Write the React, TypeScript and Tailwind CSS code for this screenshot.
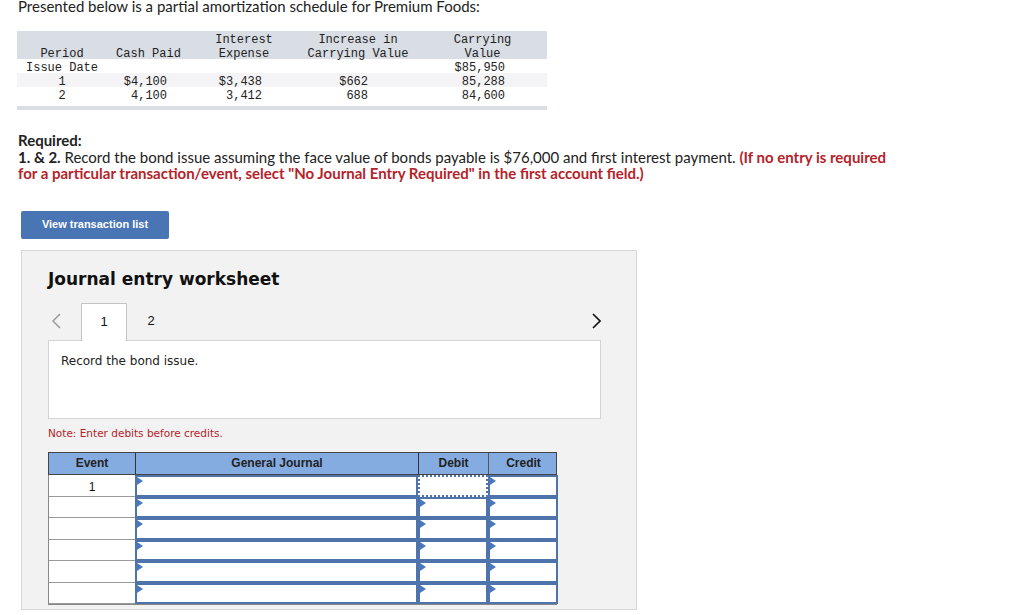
import React from "react";

const mono = { fontFamily: '"Liberation Mono", monospace' };

function Tri() {
  return (
    <svg className="absolute left-0 top-0" width="6" height="8" viewBox="0 0 6 8">
      <polygon points="0,0 6,4 0,8" fill="#4a78c0" />
    </svg>
  );
}

export default function App() {
  const rows = [22, 21, 22, 21, 22, 21];
  return (
    <div className="w-[1024px] h-[615px] bg-white overflow-hidden text-[#222]" style={{ fontFamily: 'Lato, "Open Sans", sans-serif' }}>
      <div className="pl-[18px] pt-0 text-[15px] leading-[13px] text-[#222]">
        Presented below is a partial amortization schedule for Premium Foods:
      </div>

      {/* amortization table */}
      <div className="ml-[17px] mt-[18px] w-[530px] text-[12px] leading-[14px] text-[#222]" style={mono}>
        <div className="grid grid-cols-[90px_83px_108px_120px_129px] bg-[#d9dde4] text-center *:relative *:top-[2px]">
          <div className="pt-[14px]">Period</div>
          <div className="pt-[14px]">Cash Paid</div>
          <div>Interest<br />Expense</div>
          <div>Increase in<br />Carrying Value</div>
          <div>Carrying<br />Value</div>
        </div>
        <div className="grid grid-cols-[90px_83px_108px_120px_129px] *:relative *:top-[2px]">
          <div className="text-center">Issue Date</div>
          <div></div>
          <div></div>
          <div></div>
          <div className="text-right pr-[42px]">$85,950</div>
        </div>
        <div className="grid grid-cols-[90px_83px_108px_120px_129px] bg-[#f4f4f6] *:relative *:top-[2px]">
          <div className="text-center">1</div>
          <div className="text-right pr-[23px]">$4,100</div>
          <div className="text-right pr-[36px]">$3,438</div>
          <div className="text-right pr-[50px]">$662</div>
          <div className="text-right pr-[42px]">85,288</div>
        </div>
        <div className="grid grid-cols-[90px_83px_108px_120px_129px] *:relative *:top-[2px]">
          <div className="text-center">2</div>
          <div className="text-right pr-[23px]">4,100</div>
          <div className="text-right pr-[36px]">3,412</div>
          <div className="text-right pr-[50px]">688</div>
          <div className="text-right pr-[42px]">84,600</div>
        </div>
        <div className="mt-[5px] h-[4px] bg-[#d9dde4]"></div>
      </div>

      {/* required */}
      <div className="pl-[18px] mt-[22px] text-[15px] leading-[16.5px] pr-[120px]">
        <div className="font-bold">Required:</div>
        <div>
          <span className="font-bold">1. &amp; 2.</span> Record the bond issue assuming the face value of bonds payable is $76,000 and first interest payment.{" "}
          <span className="font-bold text-[#b5232a]">(If no entry is required for a particular transaction/event, select "No Journal Entry Required" in the first account field.)</span>
        </div>
      </div>

      {/* button */}
      <div className="pl-[21px] mt-[29px]">
        <div className="w-[148px] h-[28px] rounded-[2px] bg-[#4a75b5] text-white text-[11px] font-bold flex items-center justify-center" style={{ fontFamily: '"Liberation Sans", Arial, sans-serif' }}>
          View transaction list
        </div>
      </div>

      {/* worksheet panel */}
      <div className="ml-[21px] mt-[11px] w-[616px] h-[360px] bg-[#f2f2f2] border border-[#d6d6d6] pl-[26px] pr-[35px] pt-[16px]" style={{ fontFamily: '"DejaVu Sans", Verdana, sans-serif' }}>
        <div className="text-[17px] leading-[24px] font-bold text-[#111]">Journal entry worksheet</div>

        {/* tabs */}
        <div className="mt-[11px] h-[38px] flex items-stretch relative">
          <div className="w-[33px] flex items-center pl-[4px] text-[#999]">
            <svg width="9" height="16" viewBox="0 0 9 16"><polyline points="8,1 1,8 8,15" fill="none" stroke="#9a9a9a" strokeWidth="1.5" /></svg>
          </div>
          <div className="w-[46px] bg-white border border-b-0 border-[#c4c4c4] flex items-center justify-center text-[13px] text-[#111] relative top-[1px] z-10" style={{ fontFamily: '"Liberation Sans", Arial, sans-serif' }}>1</div>
          <div className="w-[48px] flex items-center justify-center text-[13px] text-[#111]" style={{ fontFamily: '"Liberation Sans", Arial, sans-serif' }}>2</div>
          <div className="flex-1 flex items-center justify-end pr-[0px]">
            <svg width="9" height="16" viewBox="0 0 9 16"><polyline points="1,1 8,8 1,15" fill="none" stroke="#111" strokeWidth="1.6" /></svg>
          </div>
        </div>

        <div className="w-[553px] h-[79px] bg-white border border-[#d4d4d4] pl-[12px] pt-[11px] text-[12px] text-[#222]">
          Record the bond issue.
        </div>

        <div className="mt-[7px] text-[10.5px] leading-[14px] text-[#b5232a]">Note: Enter debits before credits.</div>

        {/* journal table */}
        <div className="mt-[12px] w-[509px]" style={{ fontFamily: '"Liberation Sans", Arial, sans-serif' }}>
          <div className="grid grid-cols-[87px_283px_70px_69px] h-[23px] bg-[#85ace1] border border-[#444] text-[12px] font-bold text-[#222]">
            <div className="flex items-center justify-center border-r border-[#333]">Event</div>
            <div className="flex items-center justify-center border-r border-[#333]">General Journal</div>
            <div className="flex items-center justify-center border-r border-[#555]">Debit</div>
            <div className="flex items-center justify-center">Credit</div>
          </div>
          <div className="border-l border-b border-[#888]">
            {rows.map((h, i) => (
              <div key={i} className="grid grid-cols-[86px_283px_70px_70px]" style={{ height: h }}>
                <div className="bg-white border-b border-[#999] flex items-center justify-center pt-[3px] text-[12px] text-[#111]">{i === 0 ? "1" : ""}</div>
                <div className="relative bg-white border-2 border-[#4f74ab]"><Tri /></div>
                <div className={"relative bg-white border-2 " + (i === 0 ? "border-dotted border-[#4f74ab]" : "border-[#4f74ab]")}>{i === 0 ? null : <Tri />}</div>
                <div className="relative bg-white border-2 border-[#4f74ab]"><Tri /></div>
              </div>
            ))}
          </div>
        </div>
      </div>
    </div>
  );
}
